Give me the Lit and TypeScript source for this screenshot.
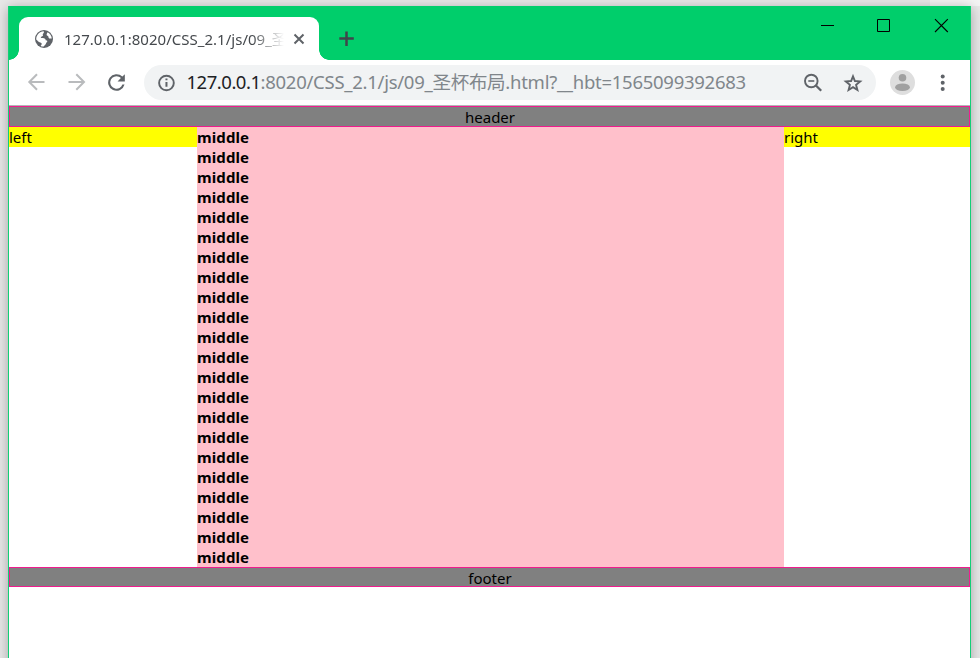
import { LitElement, html, svg, css } from "lit";
import { customElement } from "lit/decorators.js";

const icon = (name: string, size: number, body: unknown) =>
  html`<svg class="icon ${name}" width=${size} height=${size} viewBox="0 0 24 24">${body}</svg>`;

@customElement("browser-tabs")
class BrowserTabs extends LitElement {
  static styles = css`
    :host { display: flex; height: 54px; box-sizing: border-box; padding: 11px 0 0 10px; background: #00ce6b; position: relative; }
    .tab { position: relative; width: 300px; height: 43px; background: #fff; border-radius: 9px 9px 0 0; display: flex; align-items: center; box-sizing: border-box; padding: 0 14px 0 15px; }
    .tab::before, .tab::after { content: ""; position: absolute; bottom: 0; width: 10px; height: 10px; }
    .tab::before { left: -10px; background: radial-gradient(circle at 0 0, transparent 9.5px, #fff 10px); }
    .tab::after { right: -10px; background: radial-gradient(circle at 100% 0, transparent 9.5px, #fff 10px); }
    svg { display: block; flex: none; }
    .title { margin-left: 10px; width: 222px; white-space: nowrap; font-size: 15px; letter-spacing: 0.02px; line-height: 24px; color: #45494d; -webkit-mask-image: linear-gradient(to right, #000 188px, transparent 220px); mask-image: linear-gradient(to right, #000 188px, transparent 220px); }
    .close { margin-left: 7px; }
    .plus { margin: 14px 0 0 20px; }
    .controls { display: flex; margin-left: auto; gap: 43px; padding: 1px 21px 0 0; }
  `;
  render() {
    return html`
      <div class="tab">
        <svg width="20" height="20" viewBox="0 0 20 20">
          <circle cx="10" cy="10" r="9" fill="#5f6368"/>
          <path d="M9.6 2.2 C10.8 4 8.2 4.6 8.9 6.2 C9.7 7.2 7.1 7.1 6.8 8.3 C6.7 9.2 8 9 8.8 9.1 C10.6 9.2 11.8 10 11.6 11.3 C13.4 11.2 14 12.3 12.7 13.2 C11.7 14.2 12.2 15.1 10.7 16.2 L9.7 17.5 C8.7 17.6 7.6 17.4 6.6 17 C8.2 15.4 8.1 14 6.3 13.5 C4.3 13.1 3.5 11.2 2.2 10.4 C2.2 5.9 5.5 2.3 9.6 2.2Z M13.5 3.2 C15.9 4.4 17.6 6.7 17.8 9.4 C17 9.3 16.3 9.9 15.2 9.4 C14 8.7 15 7.3 13.5 6.8 C12 6.3 12.6 4.9 13.5 3.2Z" fill="#fff"/>
        </svg>
        <div class="title">127.0.0.1:8020/CSS_2.1/js/09_圣</div>
        <svg class="close" width="12" height="12" viewBox="0 0 12 12"><path d="M1.5 1.5 10.5 10.5M10.5 1.5 1.5 10.5" stroke="#5f6368" stroke-width="2"/></svg>
      </div>
      <svg class="plus" width="16" height="16" viewBox="0 0 16 16"><path d="M7.5 .5V15M.3 7.5H14.8" stroke="#3f454b" stroke-width="2.5"/></svg>
      <div class="controls">
        <svg width="13" height="15" viewBox="0 0 13 15"><path d="M0 7.5H13" stroke="#000"/></svg>
        <svg width="13" height="15" viewBox="0 0 13 15"><path d="M.5 1.5H12.5V13.5H.5Z" fill="none" stroke="#000"/></svg>
        <svg width="16" height="15" viewBox="0 0 16 15"><path d="M2 1.2 14.8 14M14.8 1.2 2 14" stroke="#000" stroke-width="1.1"/></svg>
      </div>`;
  }
}

@customElement("browser-toolbar")
class BrowserToolbar extends LitElement {
  static styles = css`
    :host { display: flex; height: 45px; box-sizing: border-box; align-items: center; padding-left: 15px; background: #fff; }
    svg { display: block; flex: none; }
    .nav { display: flex; gap: 16px; }
    .omnibox { display: flex; align-items: center; box-sizing: border-box; width: 732px; height: 35px; margin-left: 15px; padding: 0 11px 0 11px; border-radius: 18px; background: #f1f3f4; }
    .url { display: flex; margin: -2px 0 0 9.5px; font-size: 18.5px; letter-spacing: -0.27px; line-height: 30px; white-space: nowrap; color: #80868b; }
    .host { color: #202124; letter-spacing: -0.48px; }
    .zoom { margin-left: auto; }
    .star { margin-left: 16px; }
    .avatar { margin-left: 14px; }
    .menu { margin-left: 16px; }
  `;
  render() {
    return html`
      <div class="nav">
        ${icon("back", 24, svg`<path d="M20.5 12H5.5M13 4.3 5.3 12l7.7 7.7" fill="none" stroke="#b9bbbd" stroke-width="2"/>`)}
        ${icon("forward", 24, svg`<path d="M4.5 12H19.5M12.3 4.3 20 12 12.3 19.7" fill="none" stroke="#b9bbbd" stroke-width="2"/>`)}
        ${icon("reload", 25, svg`<path d="M17.65 6.35A8 8 0 1 0 19.73 14h-2.08A6 6 0 1 1 12 6c1.66 0 3.14.69 4.22 1.78L13 11h7V4Z" fill="#5f6368"/>`)}
      </div>
      <div class="omnibox">
        ${icon("info", 22, svg`<circle cx="12.5" cy="12" r="8" fill="none" stroke="#5f6368" stroke-width="2.1"/><path d="M11.4 7h2.2v2h-2.2zM11.4 10.8h2.2v5.4h-2.2z" fill="#5f6368"/>`)}
        <div class="url"><span class="host">127.0.0.1</span><span>:8020/CSS_2.1/js/09_圣杯布局.html?__hbt=1565099392683</span></div>
        ${icon("zoom", 24, svg`<circle cx="10.3" cy="10" r="6.3" fill="none" stroke="#5f6368" stroke-width="1.9"/><path d="M7.3 10h6" stroke="#5f6368" stroke-width="1.6"/><path d="M14.7 14.2 20.2 19.7" fill="none" stroke="#5f6368" stroke-width="2.3"/>`)}
        ${icon("star", 24, svg`<path d="M12 5.3 13.9 10l5.3.4-4.1 3.5 1.3 5.1L12 16.2l-4.4 2.8 1.3-5.1L4.8 10.4l5.3-.4Z" fill="none" stroke="#5f6368" stroke-width="1.9"/>`)}
      </div>
      <svg class="avatar" width="25" height="25" viewBox="0 0 25 25"><circle cx="12.5" cy="12.5" r="12.5" fill="#dedede"/><circle cx="12.5" cy="7.7" r="3.8" fill="#a0a0a0"/><ellipse cx="12.5" cy="17.2" rx="7.4" ry="3.8" fill="#a0a0a0"/></svg>
      ${icon("menu", 24, svg`<g fill="#5f6368"><circle cx="11.7" cy="5.6" r="2"/><circle cx="11.7" cy="11.8" r="2"/><circle cx="11.7" cy="18" r="2"/></g>`)}
    `;
  }
}

@customElement("grail-page")
class GrailPage extends LitElement {
  static styles = css`
    :host { display: block; border-top: 1px solid #b4b6b8; background: #fff; font-size: 15px; line-height: 20px; color: #000; }
    .bar { box-sizing: border-box; height: 21px; border: 1px solid #f01c8e; background: #808080; text-align: center; line-height: 21px; padding-left: 1px; }
    .footer { height: 20px; }
    .columns { display: grid; grid-template-columns: 188px 587px 1fr; align-items: start; }
    .side { height: 20px; background: #ff0; line-height: 21px; }
    .middle { background: #ffc0cb; font-weight: 700; font-size: 15px; letter-spacing: 0.1px; }
    .line { height: 20px; line-height: 21px; }
  `;
  render() {
    return html`
      <div class="bar">header</div>
      <div class="columns">
        <div class="side">left</div>
        <div class="middle">${Array.from({ length: 22 }, () => html`<div class="line">middle</div>`)}</div>
        <div class="side">right</div>
      </div>
      <div class="bar footer">footer</div>`;
  }
}

@customElement("app-root")
class AppRoot extends LitElement {
  static styles = css`
    :host { display: block; box-sizing: border-box; width: 980px; height: 658px; padding: 6px 9px 0 8px; overflow: hidden; background: linear-gradient(#f4f4f4, #f4f4f4) 930px 0 / 50px 6px no-repeat, #e8e8e8; font-family: "Noto Sans", "Noto Sans CJK SC", sans-serif; }
    .window { box-sizing: border-box; height: 672px; border: solid #12cf76; border-width: 0 1px; background: #fff; box-shadow: 0 2px 12px rgba(0, 0, 0, 0.3); }
  `;
  render() {
    return html`<div class="window">
      <browser-tabs></browser-tabs>
      <browser-toolbar></browser-toolbar>
      <grail-page></grail-page>
    </div>`;
  }
}
